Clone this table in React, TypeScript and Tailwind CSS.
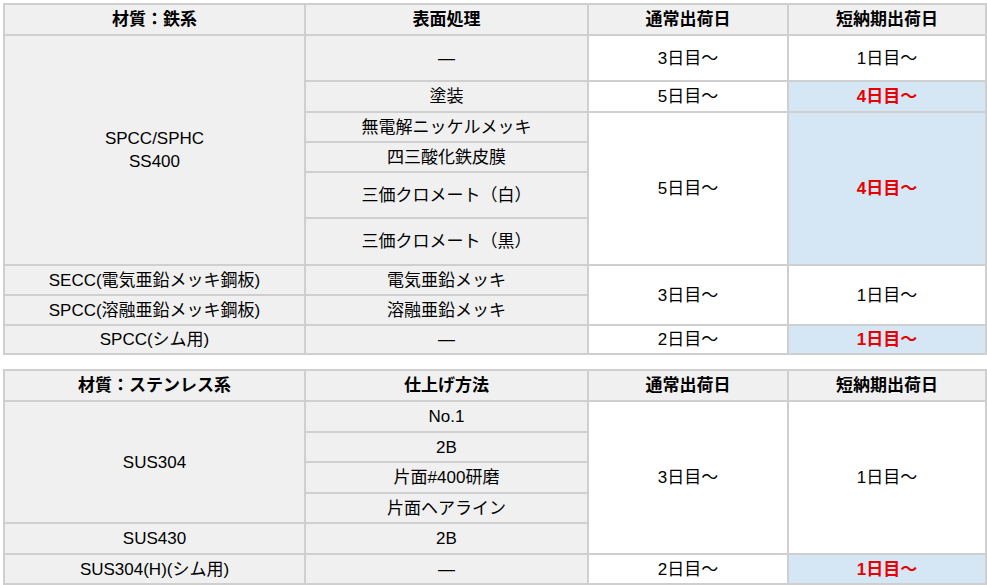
import React from "react";

const font = { fontFamily: '"Liberation Sans", "Noto Sans CJK JP", sans-serif' };

const G = "bg-[#f0f0f0]";
const W = "bg-white";
const B = "bg-[#d5e7f4]";
const base = "border-r-2 border-b-2 border-[#cfcfcf] text-center align-middle p-0 text-[17px] leading-[23px]";

function Td({
  children,
  bg = W,
  rs,
  red,
  bold,
}: {
  children?: React.ReactNode;
  bg?: string;
  rs?: number;
  red?: boolean;
  bold?: boolean;
}) {
  return (
    <td
      rowSpan={rs}
      className={`${base} ${bg} ${red ? "text-[#e80000] font-bold" : "text-black"} ${bold ? "font-bold" : ""}`}
    >
      {children}
    </td>
  );
}

function Head({ a, b }: { a: string; b: string }) {
  return (
    <tr className="h-[31px]">
      <Td bg={G} bold>{a}</Td>
      <Td bg={G} bold>{b}</Td>
      <Td bg={G} bold>通常出荷日</Td>
      <Td bg={G} bold>短納期出荷日</Td>
    </tr>
  );
}

function Cols() {
  return (
    <colgroup>
      <col className="w-[301px]" />
      <col className="w-[283px]" />
      <col className="w-[200px]" />
      <col className="w-[198px]" />
    </colgroup>
  );
}

export default function App() {
  return (
    <div className="bg-white w-[987px] h-[585px] pt-[3px] pl-[3px]" style={font}>
      <table className="table-fixed border-separate border-spacing-0 w-[984px] border-l-2 border-t-2 border-[#cfcfcf]">
        <Cols />
        <tbody>
          <Head a="材質：鉄系" b="表面処理" />
          <tr className="h-[46px]">
            <Td bg={G} rs={6}>
              SPCC/SPHC
              <br />
              SS400
            </Td>
            <Td bg={G}>—</Td>
            <Td>3日目～</Td>
            <Td>1日目～</Td>
          </tr>
          <tr className="h-[31px]">
            <Td bg={G}>塗装</Td>
            <Td>5日目～</Td>
            <Td bg={B} red>4日目～</Td>
          </tr>
          <tr className="h-[30px]">
            <Td bg={G}>無電解ニッケルメッキ</Td>
            <Td rs={4}>5日目～</Td>
            <Td bg={B} rs={4} red>4日目～</Td>
          </tr>
          <tr className="h-[30px]">
            <Td bg={G}>四三酸化鉄皮膜</Td>
          </tr>
          <tr className="h-[46px]">
            <Td bg={G}>三価クロメート（白）</Td>
          </tr>
          <tr className="h-[47px]">
            <Td bg={G}>三価クロメート（黒）</Td>
          </tr>
          <tr className="h-[30px]">
            <Td bg={G}>SECC(電気亜鉛メッキ鋼板)</Td>
            <Td bg={G}>電気亜鉛メッキ</Td>
            <Td rs={2}>3日目～</Td>
            <Td rs={2}>1日目～</Td>
          </tr>
          <tr className="h-[30px]">
            <Td bg={G}>SPCC(溶融亜鉛メッキ鋼板)</Td>
            <Td bg={G}>溶融亜鉛メッキ</Td>
          </tr>
          <tr className="h-[29px]">
            <Td bg={G}>SPCC(シム用)</Td>
            <Td bg={G}>—</Td>
            <Td>2日目～</Td>
            <Td bg={B} red>1日目～</Td>
          </tr>
        </tbody>
      </table>

      <table className="mt-[14px] table-fixed border-separate border-spacing-0 w-[984px] border-l-2 border-t-2 border-[#cfcfcf]">
        <Cols />
        <tbody>
          <Head a="材質：ステンレス系" b="仕上げ方法" />
          <tr className="h-[31px]">
            <Td bg={G} rs={4}>SUS304</Td>
            <Td bg={G}>No.1</Td>
            <Td rs={5}>3日目～</Td>
            <Td rs={5}>1日目～</Td>
          </tr>
          <tr className="h-[30px]">
            <Td bg={G}>2B</Td>
          </tr>
          <tr className="h-[31px]">
            <Td bg={G}>片面#400研磨</Td>
          </tr>
          <tr className="h-[30px]">
            <Td bg={G}>片面ヘアライン</Td>
          </tr>
          <tr className="h-[31px]">
            <Td bg={G}>SUS430</Td>
            <Td bg={G}>2B</Td>
          </tr>
          <tr className="h-[30px]">
            <Td bg={G}>SUS304(H)(シム用)</Td>
            <Td bg={G}>—</Td>
            <Td>2日目～</Td>
            <Td bg={B} red>1日目～</Td>
          </tr>
        </tbody>
      </table>
    </div>
  );
}
